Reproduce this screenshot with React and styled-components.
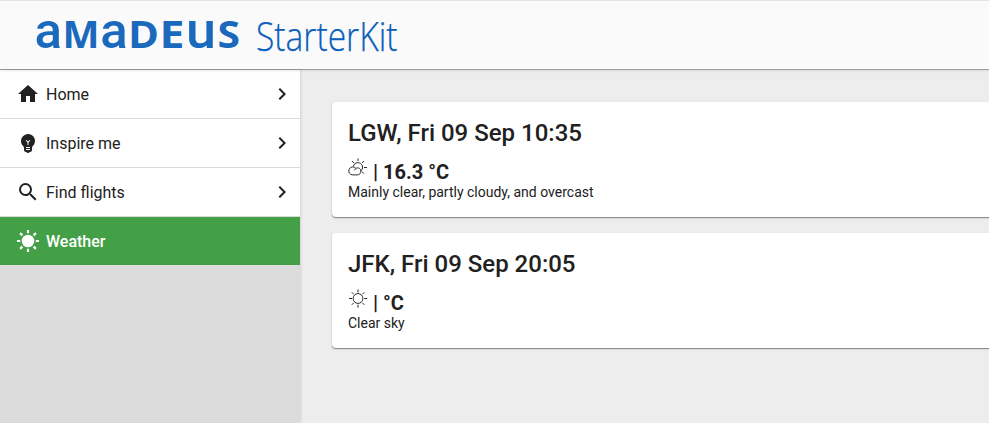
import React from "react";
import styled, { createGlobalStyle, css } from "styled-components";
import { MdHome, MdEmojiObjects, MdSearch, MdNavigateNext } from "react-icons/md";

const GlobalStyle = createGlobalStyle`
  *, *::before, *::after { box-sizing: border-box; }
  body {
    margin: 0;
    overflow: hidden;
    font-family: Roboto, "Liberation Sans", sans-serif;
    color: #212121;
    background: #ededed;
  }
`;

const Shell = styled.div`
  display: flex;
  flex-direction: column;
  height: 100vh;
`;

const Header = styled.header`
  flex: none;
  height: 69px;
  z-index: 2;
  background: #fafafa;
  border-top: 1px solid #e4e4e4;
  box-shadow: 0 1px 0 rgba(0, 0, 0, 0.26), 0 1px 3px rgba(0, 0, 0, 0.16);
`;

const Brand = styled.svg`
  display: block;
  overflow: visible;
`;

const LogoLetter = styled.text`
  font-family: ${(p) => (p.$caps ? '"Open Sans"' : "Roboto")}, sans-serif;
  font-weight: ${(p) => (p.$caps ? 700 : 500)};
  font-size: ${(p) => (p.$caps ? 37 : 50)}px;
  fill: #1b69bd;
`;

const ProductName = styled.text`
  font-family: "Open Sans", sans-serif;
  font-weight: 300;
  font-size: 39.5px;
  fill: #0a5fba;
  stroke: #0a5fba;
  stroke-width: 0.25px;
`;

const Body = styled.div`
  display: flex;
  flex: 1;
  min-height: 0;
`;

const Sidebar = styled.nav`
  flex: none;
  width: 300px;
  padding-top: 1px;
  z-index: 1;
  background: #dcdcdc;
  box-shadow: 0 0 3px rgba(0, 0, 0, 0.22);
`;

const NavItem = styled.a`
  display: flex;
  align-items: center;
  height: 49px;
  padding: 0 6px 0 16px;
  font-size: 16px;
  line-height: 24px;
  font-weight: 400;
  background: #fff;
  border-bottom: 1px solid #dadada;
  ${(p) =>
    p.$active &&
    css`
      font-weight: 500;
      color: #fff;
      background: #43a047;
      border-bottom-color: #dcdcdc;
    `}
`;

const NavIcon = styled.span`
  display: flex;
  margin-right: 6px;
  font-size: 24px;
`;

const NavLabel = styled.span`
  padding-top: 2px;
`;

const NavArrow = styled(MdNavigateNext)`
  margin-left: auto;
  font-size: 24px;
`;

const Main = styled.main`
  flex: 1;
  min-width: 0;
  display: flex;
  flex-direction: column;
  gap: 16px;
  padding: 33px 0 0 32px;
`;

const Card = styled.section`
  height: 115px;
  margin-right: -20px;
  padding: 16px;
  background: #fff;
  border-radius: 4px;
  box-shadow: 0 1px 1px rgba(0, 0, 0, 0.4), 0 1px 3px rgba(0, 0, 0, 0.1);
`;

const CardTitle = styled.h2`
  margin: 0;
  font-size: 24px;
  line-height: 30px;
  font-weight: 500;
`;

const Reading = styled.div`
  display: flex;
  align-items: flex-start;
  gap: 5px;
  height: 26px;
  margin-top: 8px;
  font-size: 20px;
  line-height: 32px;
  font-weight: 700;
`;

const WeatherGlyph = styled.svg`
  flex: none;
  margin-top: 2px;
`;

const Summary = styled.p`
  margin: 0;
  font-size: 14px;
  line-height: 20px;
`;

const LETTERS = [
  { ch: "a", x: 34.5, width: 27.5 },
  { ch: "M", x: 62.6, width: 37, caps: true },
  { ch: "a", x: 100.3, width: 27.5 },
  { ch: "D", x: 128, width: 31, caps: true },
  { ch: "E", x: 159.5, width: 25, caps: true },
  { ch: "u", x: 186, width: 30 },
  { ch: "S", x: 217.5, width: 22.5, caps: true },
];

function Logo() {
  return (
    <Brand width="600" height="68" viewBox="0 1 600 68">
      {LETTERS.map((l) => (
        <LogoLetter key={l.x} $caps={l.caps} x={l.x} y="48" textLength={l.width} lengthAdjust="spacingAndGlyphs">
          {l.ch}
        </LogoLetter>
      ))}
      <ProductName x="256" y="51" textLength="141.5" lengthAdjust="spacingAndGlyphs">
        StarterKit
      </ProductName>
    </Brand>
  );
}

function BrightSunIcon() {
  return (
    <svg width="24" height="24" viewBox="0 0 24 24" fill="none" stroke="currentColor" strokeWidth="2.2">
      <circle cx="12" cy="12" r="6.3" fill="currentColor" stroke="none" />
      <path d="M12 1v3.2M12 19.8v3.2M1 12h3.2M19.8 12h3.2M4.1 4.1l2.3 2.3M17.6 17.6l2.3 2.3M19.9 4.1l-2.3 2.3M6.4 17.6l-2.3 2.3" />
    </svg>
  );
}

function SunIcon() {
  return (
    <WeatherGlyph width="20" height="20" viewBox="0 0 20 20" fill="none" stroke="#2b2b2b" strokeWidth="1">
      <circle cx="10" cy="9.5" r="4.9" />
      <path d="M10 .5v3M10 15.7v3M1 9.5h3M16.2 9.5h3M3.8 3.3l2 2M14.3 13.8l2 2M16.3 3.3l-2 2M5.8 13.8l-2 2" />
    </WeatherGlyph>
  );
}

function PartlyCloudyIcon() {
  return (
    <WeatherGlyph width="20" height="20" viewBox="0 0 20 20" fill="none" stroke="#2b2b2b" strokeWidth="1">
      <path d="M10 .5v2.5M3.9 3l2 2M16.1 3l-2 2M16 9.5h3M13.9 13.6l2 2" />
      <path d="M5.3 8.4a4.7 4.7 0 1 1 7.5 4.6" />
      <path d="M4.8 16.9a4 4 0 1 1 3.1-6.5c2.1-1.3 5-.1 5 2.7 0 2.3-1.5 3.8-3.7 3.8z" />
      <path d="M6.7 12.3c.2-.8.6-1.4 1.2-1.9" />
    </WeatherGlyph>
  );
}

const NAV = [
  { label: "Home", Icon: MdHome },
  { label: "Inspire me", Icon: MdEmojiObjects },
  { label: "Find flights", Icon: MdSearch },
  { label: "Weather", Icon: BrightSunIcon, active: true },
];

const REPORTS = [
  { title: "LGW, Fri 09 Sep 10:35", Icon: PartlyCloudyIcon, reading: "| 16.3 °C", summary: "Mainly clear, partly cloudy, and overcast" },
  { title: "JFK, Fri 09 Sep 20:05", Icon: SunIcon, reading: "| °C", summary: "Clear sky" },
];

export default function App() {
  return (
    <Shell>
      <GlobalStyle />
      <Header>
        <Logo />
      </Header>
      <Body>
        <Sidebar>
          {NAV.map(({ label, Icon, active }) => (
            <NavItem key={label} $active={active}>
              <NavIcon>
                <Icon />
              </NavIcon>
              <NavLabel>{label}</NavLabel>
              {!active && <NavArrow />}
            </NavItem>
          ))}
        </Sidebar>
        <Main>
          {REPORTS.map(({ title, Icon, reading, summary }) => (
            <Card key={title}>
              <CardTitle>{title}</CardTitle>
              <Reading>
                <Icon />
                {reading}
              </Reading>
              <Summary>{summary}</Summary>
            </Card>
          ))}
        </Main>
      </Body>
    </Shell>
  );
}
